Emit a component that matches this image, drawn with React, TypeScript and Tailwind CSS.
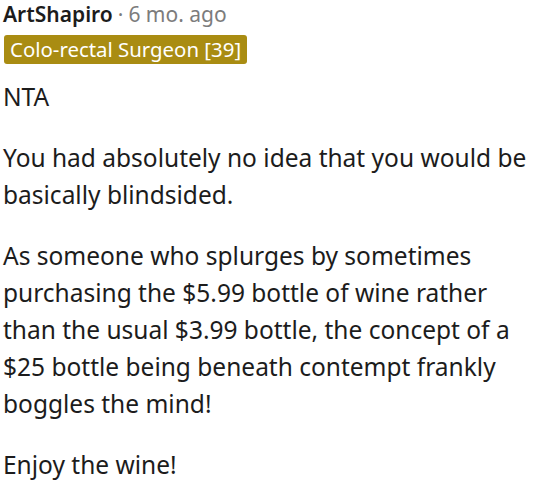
export default function App() {
  const paras = [
    "NTA",
    "You had absolutely no idea that you would be basically blindsided.",
    "As someone who splurges by sometimes purchasing the $5.99 bottle of wine rather than the usual $3.99 bottle, the concept of a $25 bottle being beneath contempt frankly boggles the mind!",
    "Enjoy the wine!",
  ];

  return (
    <div className="w-[533px] h-[487px] bg-white overflow-hidden px-[3px] font-['Noto_Sans','Open_Sans',sans-serif]">
      <div className="flex items-center text-[21px] leading-[28px]">
        <span className="font-semibold text-[#1c1c1c]">ArtShapiro</span>
        <span className="text-[#7c7c7c] ml-[5px]">·</span>
        <span className="text-[#7c7c7c] ml-[5px]">6 mo. ago</span>
      </div>
      <div className="mt-[7px] inline-block rounded-[3px] bg-[#a98c12] px-[6px] text-white text-[20.4px] leading-[29px] ml-[1px]">
        Colo-rectal Surgeon [39]
      </div>
      <div className="mt-[14px] text-[24.5px] leading-[37px] text-[#1c1c1c]">
        {paras.map((p, i) => (
          <p key={i} className={i > 0 ? "mt-[24px]" : ""}>
            {p}
          </p>
        ))}
      </div>
    </div>
  );
}
